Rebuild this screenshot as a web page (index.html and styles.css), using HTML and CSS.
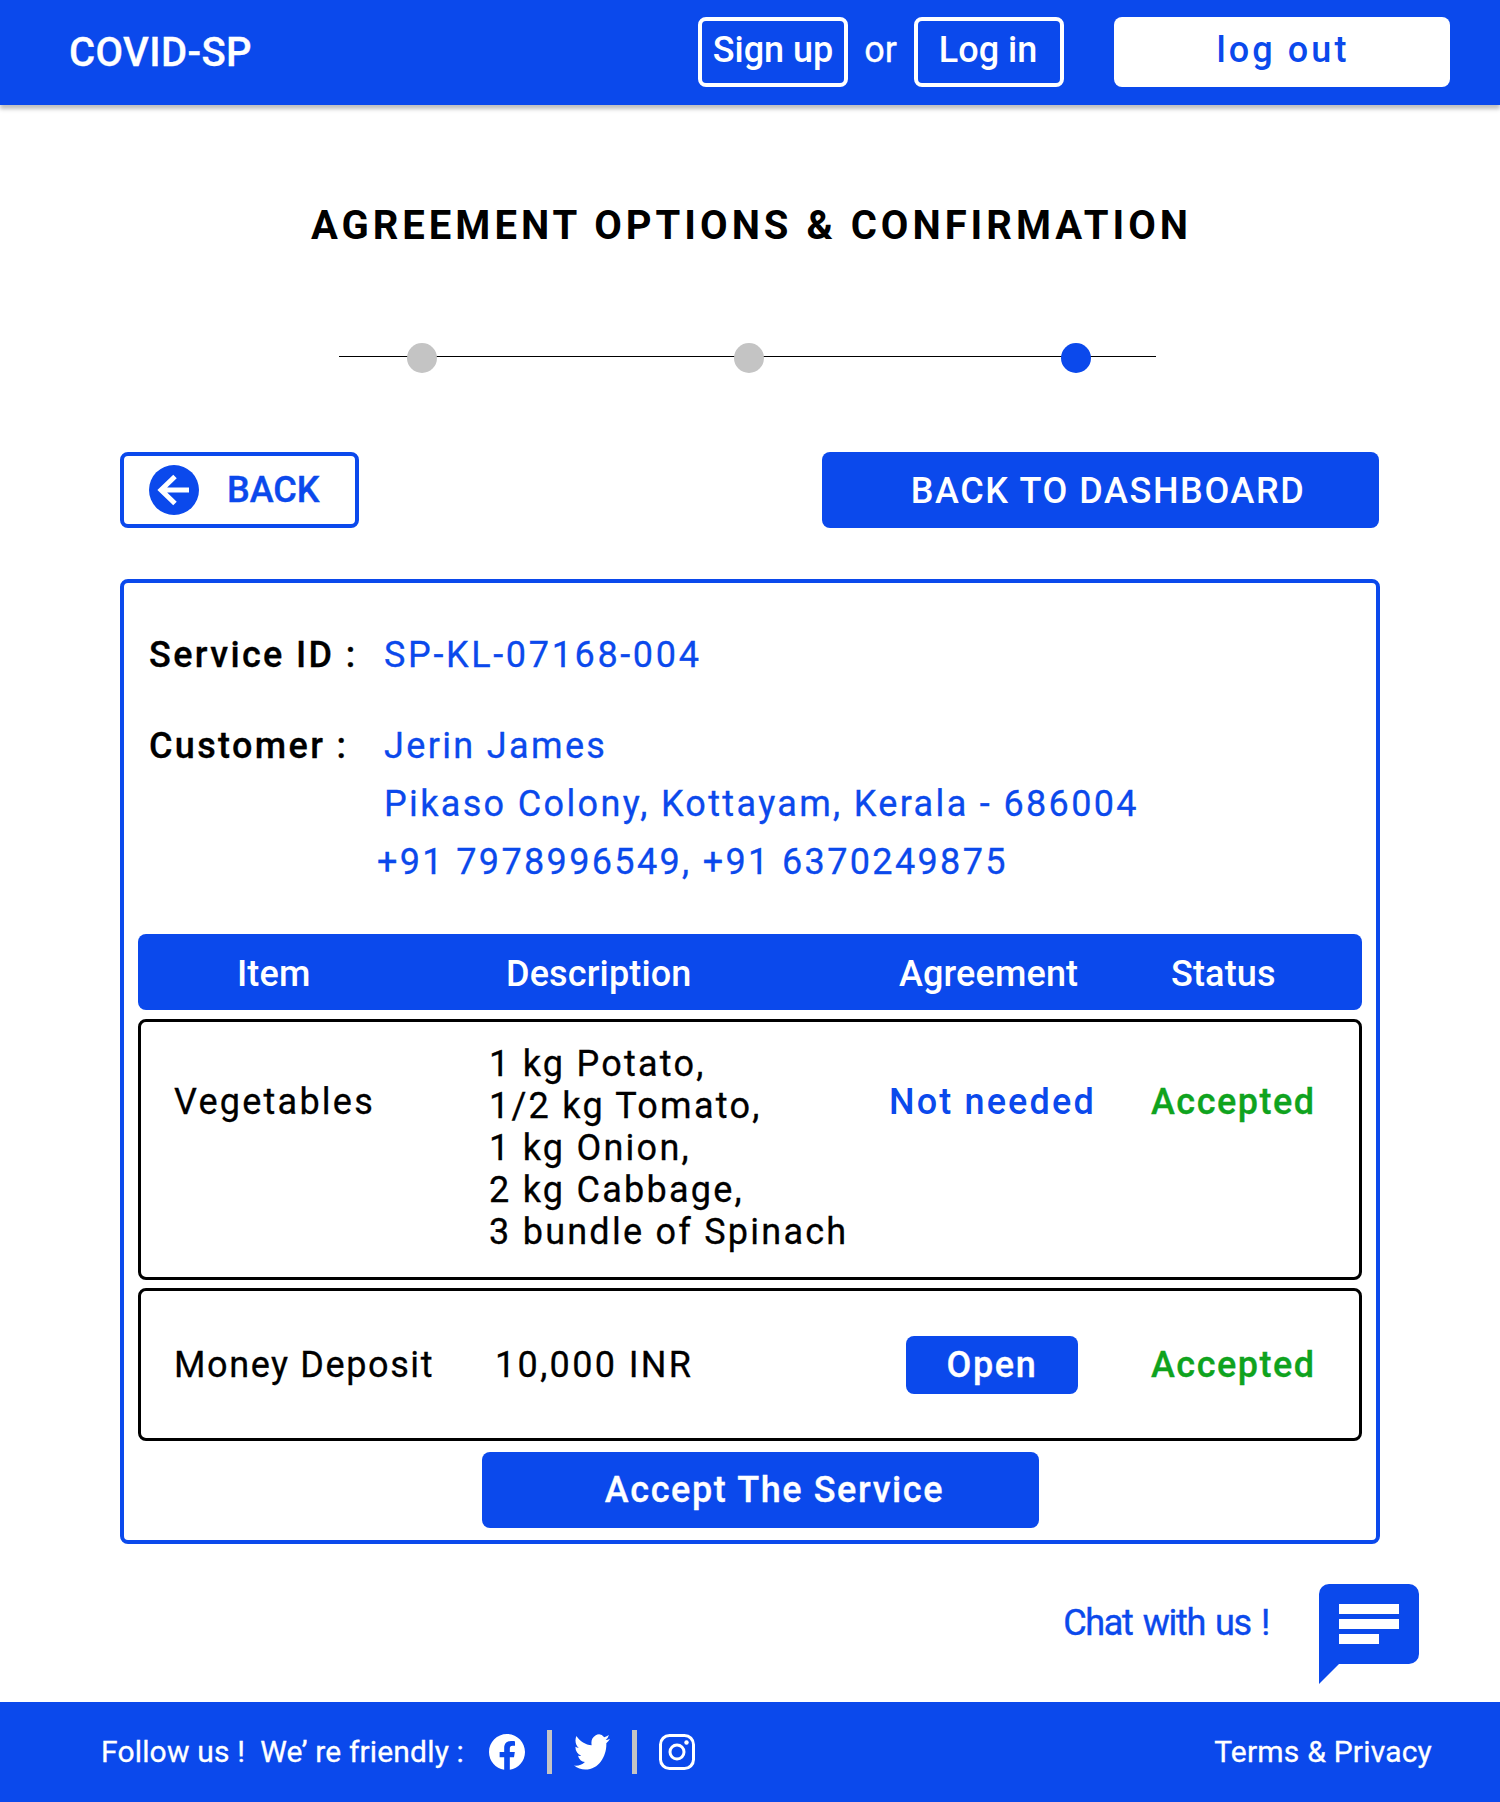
FILE: index.html
```html
<!DOCTYPE html>
<html lang="en">
<head>
<meta charset="utf-8">
<title>COVID-SP</title>
<link rel="stylesheet" href="styles.css">
</head>
<body>
<header class="topbar">
  <div class="logo">COVID-SP</div>
  <nav class="nav">
    <a class="nav-btn signup">Sign up</a>
    <span class="or">or</span>
    <a class="nav-btn login">Log in</a>
    <a class="logout">log out</a>
  </nav>
</header>
<main class="page">
  <h1 class="title">AGREEMENT OPTIONS &amp; CONFIRMATION</h1>
  <div class="stepper">
    <span class="dot"></span>
    <span class="dot"></span>
    <span class="dot active"></span>
  </div>
  <div class="actions">
    <a class="back">
      <svg class="back-icon" viewBox="0 0 50 50"><circle cx="25" cy="25" r="25" fill="#0b49ec"/><path d="M40 25H13M26 11.500L12 25 26 38.500" fill="none" stroke="#fff" stroke-width="5"/></svg>
      <span>BACK</span>
    </a>
    <a class="dashboard">BACK TO DASHBOARD</a>
  </div>
  <section class="card">
    <div class="info service">
      <div class="label">Service ID :</div>
      <div class="value">SP-KL-07168-004</div>
    </div>
    <div class="info customer">
      <div class="label">Customer :</div>
      <div class="value">
        <div>Jerin James</div>
        <div>Pikaso Colony, Kottayam, Kerala - 686004</div>
        <div class="phones">+91 7978996549, +91 6370249875</div>
      </div>
    </div>
    <div class="thead">
      <div>Item</div>
      <div>Description</div>
      <div>Agreement</div>
      <div>Status</div>
    </div>
    <div class="row row-top">
      <div class="cell-lower">Vegetables</div>
      <div>1 kg Potato,<br>1/2 kg Tomato,<br>1 kg Onion,<br>2 kg Cabbage,<br>3 bundle of Spinach</div>
      <div class="cell-lower link">Not needed</div>
      <div class="cell-lower ok">Accepted</div>
    </div>
    <div class="row row-mid">
      <div class="deposit">Money Deposit</div>
      <div class="amount">10,000 INR</div>
      <a class="open">Open</a>
      <div class="ok">Accepted</div>
    </div>
    <a class="accept">Accept The Service</a>
  </section>
  <div class="chat">
    <span class="chat-text">Chat with us !</span>
    <svg class="chat-icon" viewBox="0 0 100 100"><path fill="#0b49ec" d="M10 0H90A10 10 0 0 1 100 10V70A10 10 0 0 1 90 80H20L0 100V10A10 10 0 0 1 10 0Z"/><path fill="#fff" d="M20 20H80V30H20ZM20 35H80V45H20ZM20 50H60V60H20Z"/></svg>
  </div>
</main>
<footer class="footer">
  <div class="follow">
    <span class="follow-text">Follow us !&nbsp; We’ re friendly :</span>
    <svg class="social fb" viewBox="0 0 36 36"><path fill="#fff" d="M36 18C36 8.060 27.940 0 18 0S0 8.060 0 18c0 8.980 6.580 16.430 15.190 17.780V23.200h-4.570V18h4.570v-3.970c0-4.510 2.690-7 6.800-7 1.970 0 4.030.35 4.030.35v4.430h-2.270c-2.240 0-2.930 1.390-2.930 2.810V18h4.990l-.8 5.200h-4.190v12.580C29.420 34.430 36 26.980 36 18Z"/></svg>
    <span class="sep"></span>
    <svg class="social tw" viewBox="0 2 24 20" preserveAspectRatio="none"><path fill="#fff" d="M23.950 4.570a10 10 0 0 1-2.820.77 4.960 4.960 0 0 0 2.160-2.720c-.95.55-2 .96-3.130 1.190a4.920 4.920 0 0 0-8.380 4.480C7.690 8.100 4.070 6.130 1.640 3.160a4.820 4.820 0 0 0-.66 2.470c0 1.710.87 3.210 2.190 4.100a4.900 4.900 0 0 1-2.230-.62v.06a4.920 4.920 0 0 0 3.950 4.830 5 5 0 0 1-2.210.08 4.940 4.940 0 0 0 4.600 3.420A9.870 9.870 0 0 1 0 19.540a14 14 0 0 0 7.560 2.210c9.050 0 14-7.500 14-13.980 0-.21 0-.42-.02-.63a9.940 9.940 0 0 0 2.460-2.550Z"/></svg>
    <span class="sep"></span>
    <svg class="social ig" viewBox="0 0 36 36"><rect x="1.500" y="1.500" width="33" height="33" rx="9" fill="none" stroke="#fff" stroke-width="3"/><circle cx="18" cy="18" r="7" fill="none" stroke="#fff" stroke-width="3"/><circle cx="27.500" cy="8.500" r="2.200" fill="#fff"/></svg>
  </div>
  <a class="terms">Terms &amp; Privacy</a>
</footer>
</body>
</html>
```

FILE: styles.css
```css
* { box-sizing: border-box; }
html, body { margin: 0; padding: 0; }
body {
  width: 1500px;
  height: 1802px;
  background: #fff;
  font-family: Roboto, "Liberation Sans", sans-serif;
  color: #000;
  display: flex;
  flex-direction: column;
}
.topbar {
  height: 105px;
  flex: none;
  background: #0b49ec;
  display: flex;
  align-items: center;
  justify-content: space-between;
  padding: 0 50px 1px 69px;
  box-shadow: 0 4px 4px rgba(0, 0, 0, 0.25);
  position: relative;
  color: #fff;
}
.logo { font-size: 40px; font-weight: 500; letter-spacing: 0.4px; -webkit-text-stroke: 0.3px #fff; }
.nav { display: flex; align-items: center; height: 70px; }
.nav-btn {
  height: 70px;
  border: 4.500px solid #fff;
  border-radius: 8px;
  display: flex;
  align-items: center;
  justify-content: center;
  font-size: 36px;
  font-weight: 500;
  padding-bottom: 4px;
}
.signup { width: 150px; }
.or { width: 65px; text-align: center; font-size: 36px; padding-bottom: 4px; -webkit-text-stroke: 0.3px #fff; }
.login { width: 150px; margin-left: 1px; padding-right: 2px; }
.logout {
  margin-left: 50px;
  width: 336px;
  height: 70px;
  background: #fff;
  color: #0b49ec;
  border-radius: 8px;
  display: flex;
  align-items: center;
  justify-content: center;
  font-size: 36px;
  font-weight: 500;
  letter-spacing: 3.100px;
  padding: 0 0 4px 2px;
}
.page { flex: 1; display: flex; flex-direction: column; padding: 0 120px; }
.title {
  margin: 97px 0 0;
  padding-left: 3px;
  font-size: 40px;
  line-height: 47px;
  font-weight: 700;
  letter-spacing: 4px;
  text-align: center;
}
.stepper {
  position: relative;
  margin: 94px 0 0 219px;
  width: 817px;
  height: 30px;
  padding-left: 68px;
  display: flex;
  gap: 297px;
}
.stepper::before {
  content: "";
  position: absolute;
  left: 0;
  right: 0;
  top: 13px;
  height: 1px;
  background: #000;
}
.dot { position: relative; width: 30px; height: 30px; border-radius: 50%; background: #c4c4c4; }
.dot.active { background: #0b49ec; }
.actions { display: flex; justify-content: space-between; margin-top: 79px; }
.back {
  width: 239px;
  height: 76px;
  border: 4px solid #0b49ec;
  border-radius: 8px;
  display: flex;
  align-items: center;
  padding-left: 25px;
  gap: 28px;
  color: #0b49ec;
  font-size: 36px;
  font-weight: 500;
  -webkit-text-stroke: 0.4px #0b49ec;
}
.back-icon { width: 50px; height: 50px; flex: none; }
.dashboard {
  width: 557px;
  height: 76px;
  margin-right: 1px;
  background: #0b49ec;
  color: #fff;
  border-radius: 8px;
  display: flex;
  align-items: center;
  justify-content: center;
  padding: 2px 0 0 15px;
  font-size: 36px;
  font-weight: 500;
  letter-spacing: 1.600px;
}
.card {
  margin-top: 51px;
  height: 965px;
  border: 4px solid #0b49ec;
  border-radius: 8px;
  padding: 42px 14px 0;
  font-size: 36px;
  font-weight: 400;
  letter-spacing: 2.350px;
}
.info { display: grid; grid-template-columns: 235px 1fr; padding-left: 11px; line-height: 58px; }
.service { padding-top: 1px; margin-bottom: -1px; }
.service .value { letter-spacing: 2.650px; }
.customer { margin-top: 34px; }
.label { font-weight: 500; -webkit-text-stroke: 0.3px #000; }
.value { color: #0b49ec; -webkit-text-stroke: 0.3px #0b49ec; }
.phones { margin-left: -7px; }
.thead {
  margin-top: 43px;
  height: 76px;
  background: #0b49ec;
  border-radius: 8px;
  color: #fff;
  font-weight: 500;
  letter-spacing: 0.15px;
  display: grid;
  grid-template-columns: 269px 393px 272px 1fr;
  padding: 3px 0 0 99px;
  align-items: center;
}
.row {
  margin-top: 9px;
  border: 3px solid #000;
  border-radius: 8px;
  display: grid;
  grid-template-columns: 315px 400px 262px 1fr;
  padding-left: 33px;
  line-height: 42px;
  -webkit-text-stroke: 0.3px #000;
}
.row-top { height: 261px; padding-top: 21px; letter-spacing: 2.250px; }
.row-mid { height: 153px; margin-top: 8px; align-items: center; padding-top: 1px; }
.cell-lower { margin-top: 38px; }
.deposit { letter-spacing: 1.600px; }
.link { color: #0b49ec; font-weight: 500; letter-spacing: 2.150px; -webkit-text-stroke: 0; }
.ok { color: #0fa31e; font-weight: 500; letter-spacing: 1.500px; -webkit-text-stroke: 0.3px #0fa31e; }
.amount { margin-left: 6px; }
.open {
  margin-left: 17px;
  width: 172px;
  height: 58px;
  background: #0b49ec;
  color: #fff;
  border-radius: 8px;
  display: flex;
  align-items: center;
  justify-content: center;
  font-weight: 500;
  letter-spacing: 1.600px;
  -webkit-text-stroke: 0.3px #fff;
}
.accept {
  margin: 11px 0 0 344px;
  width: 557px;
  height: 76px;
  background: #0b49ec;
  color: #fff;
  border-radius: 8px;
  display: flex;
  align-items: center;
  justify-content: center;
  padding-left: 28px;
  font-weight: 500;
  letter-spacing: 1.600px;
  -webkit-text-stroke: 0.3px #fff;
}
.chat {
  margin-top: 40px;
  display: flex;
  justify-content: flex-end;
  margin-right: -39px;
}
.chat-text {
  color: #0b49ec;
  font-size: 36px;
  font-weight: 400;
  letter-spacing: -1.300px;
  word-spacing: 2.500px;
  line-height: 42px;
  margin: 18px 50px 0 0;
  -webkit-text-stroke: 0.4px #0b49ec;
}
.chat-icon { width: 100px; height: 100px; flex: none; }
.footer {
  height: 100px;
  flex: none;
  background: #0b49ec;
  color: #fff;
  display: flex;
  align-items: center;
  justify-content: space-between;
  padding: 0 68px 2px 101px;
  font-size: 30px;
  font-weight: 400;
  letter-spacing: 0.2px;
  -webkit-text-stroke: 0.3px #fff;
}
.follow { display: flex; align-items: center; }
.follow-text { width: 388px; letter-spacing: 0.16px; }
.social { width: 36px; height: 36px; flex: none; position: relative; top: 1px; }
.sep { width: 5px; height: 44px; background: #c4c4c4; margin: 0 22px; position: relative; top: 1px; }
```
